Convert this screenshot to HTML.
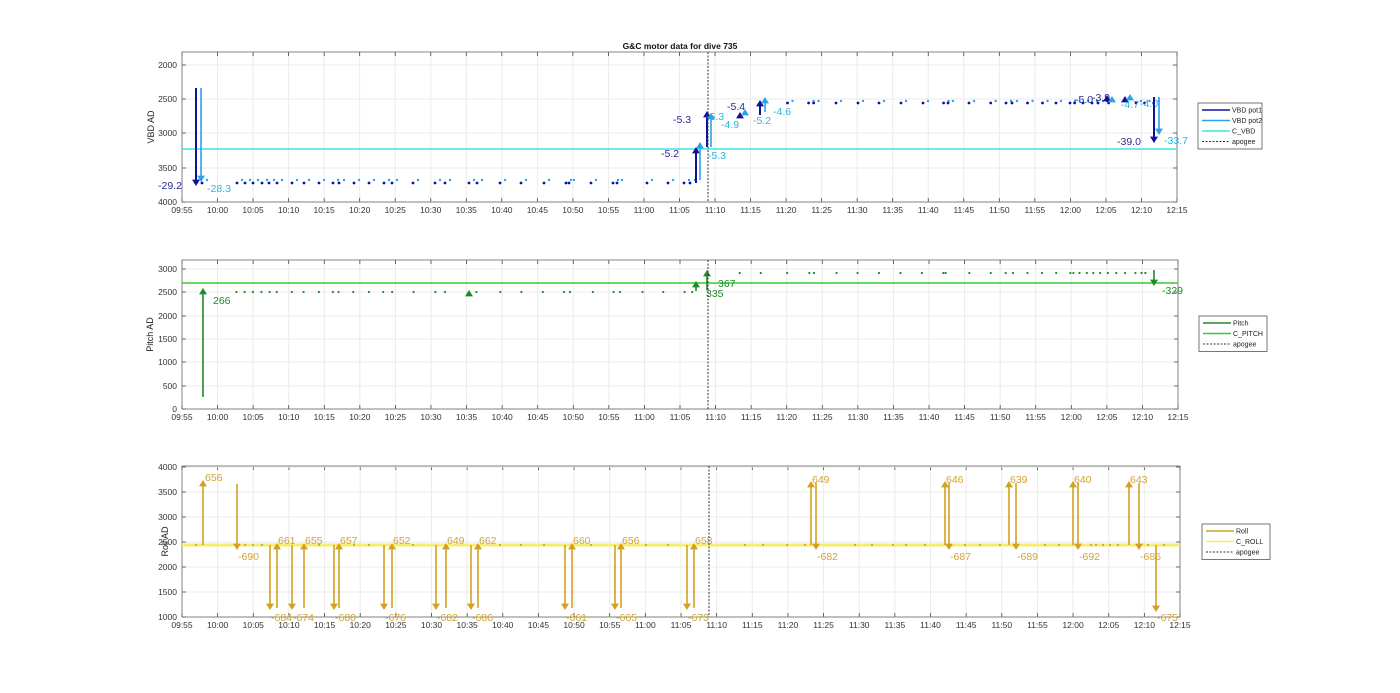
<!DOCTYPE html>
<html><head><meta charset="utf-8"><style>
html,body{margin:0;padding:0;background:#fff;width:1400px;height:693px;overflow:hidden}
svg{display:block;font-family:"Liberation Sans",sans-serif}
</style></head><body>
<svg id="s" width="1400" height="693" xmlns="http://www.w3.org/2000/svg">
<text x="680" y="49" font-size="8.5" font-weight="bold" text-anchor="middle" fill="#111">G&amp;C motor data for dive 735</text>
</svg>
<script>
var s=document.getElementById('s'),NS='http://www.w3.org/2000/svg';
function el(t,a,txt){var e=document.createElementNS(NS,t);for(var k in a)e.setAttribute(k,a[k]);if(txt!=null)e.textContent=txt;s.appendChild(e);return e;}
function line(x1,y1,x2,y2,c,w,d){var a={x1:x1,y1:y1,x2:x2,y2:y2,stroke:c,'stroke-width':w||1};if(d)a['stroke-dasharray']=d;return el('line',a);}
function txt(x,y,t,c,sz,anc){return el('text',{x:x,y:y,fill:c,'font-size':sz||11,'text-anchor':anc||'start'},t);}
function tri(x,y,c,dir,sz){sz=sz||4;var p=dir<0?[x-sz,y-sz*1.6,x+sz,y-sz*1.6,x,y]:[x-sz,y+sz*1.6,x+sz,y+sz*1.6,x,y];el('polygon',{points:p.join(','),fill:c});}
function arrow(x,y1,y2,c,w){line(x,y1,x,y2+(y2<y1?3:-3),c,w||2);tri(x,y2,c,y2>y1?-1:1,4);}
var times=[];for(var m=0;m<=140;m+=5){var h=9+Math.floor((55+m)/60),mm=(55+m)%60;times.push((h<10?'0':'')+h+':'+(mm<10?'0':'')+mm);}
function axes(L,R,T,B,yt,ylab,ylx){
 for(var i=0;i<=28;i++){var x=L+(R-L)*i/28;line(x,T,x,B,'#ebebeb',1);line(x,T,x,T+4,'#444',0.8);line(x,B,x,B-4,'#444',0.8);txt(x,B+11,times[i],'#333',8.5,'middle');}
 yt.forEach(function(t){line(L,t[1],R,t[1],'#ebebeb',1);line(L,t[1],L+4,t[1],'#444',0.8);line(R,t[1],R-4,t[1],'#444',0.8);txt(L-5,t[1]+3,t[0],'#333',8.5,'end');});
 el('rect',{x:L,y:T,width:R-L,height:B-T,fill:'none',stroke:'#666','stroke-width':0.8});
 var ym=(T+B)/2;el('text',{x:ylx,y:ym,fill:'#222','font-size':9,'text-anchor':'middle',transform:'rotate(-90 '+ylx+' '+ym+')'},ylab);
}
function legend(x,y,w,items){el('rect',{x:x,y:y,width:w,height:items.length*10.5+4,fill:'#fff',stroke:'#555','stroke-width':0.8});
 items.forEach(function(it,i){var yy=y+7+i*10.5;line(x+4,yy,x+32,yy,it[1],it[2],it[3]);txt(x+34,yy+2.5,it[0],'#222',7);});}
function dot(x,y,c,r){el('circle',{cx:x,cy:y,r:r||1.4,fill:c});}

/* Plot 1 */
var DB='#10109a',LB='#2aa4e4',CY='#40e4e4',DBT='#2a2a9a',LBT='#2ab4e0';
axes(182,1177,52,202,[['2000',65],['2500',99],['3000',133],['3500',168],['4000',202]],'VBD AD',154);
line(182,149,1177,149,CY,1.6);
var d1=[202,237,245,253,262,269,277,292,304,319,333,339,354,369,384,392,413,435,445,469,477,500,521,544,566,569,591,613,617,647,668,684,690,
787.5,808.6,813.6,836,858,879,901,923,943.6,948,969,990.7,1006,1012,1027.5,1042.5,1056,1070,1074.6,1083,1092,1098,1108.6,1136,1144.6,1153.6];
d1.forEach(function(x){var pre=x<700;dot(x,pre?183:103,DB);dot(x+5,pre?180:101,LB,1.2);});
arrow(196,88,186,DB,2);arrow(201,88,182,LB,1.6);
txt(158,189,'-29.2',DBT,10.5);txt(207,192,'-28.3',LBT,10.5);
arrow(696,183,147,DB,2);arrow(700,180,142,LB,1.6);
txt(661,157,'-5.2',DBT,10.5);txt(708,159,'-5.3',LBT,10.5);
arrow(707,147,111,DB,2);arrow(711,147,113,LB,1.6);
txt(673,123,'-5.3',DBT,10.5);txt(706,120,'-5.3',LBT,10.5);
tri(740,112,DB,1,4);tri(745,109,LB,1,4);txt(727,110,'-5.4',DBT,10.5);txt(721,128,'-4.9',LBT,10.5);
arrow(760,115,100,DB,2);arrow(765,112,97,LB,1.6);txt(753,124,'-5.2',LBT,10.5);txt(773,115,'-4.6',LBT,10.5);
txt(1075,103,'-5.0',DBT,10.5);txt(1092,101,'-3.9',DBT,10.5);
arrow(1107,102,95,DB,2);tri(1112,96,LB,1,4);tri(1125,96,DB,1,4);tri(1130,94,LB,1,4);
txt(1121,108,'-4.7',LBT,10.5);txt(1140,107,'-4.0',LBT,10.5);
arrow(1154,97,143,DB,2);arrow(1159,97,135,LB,1.6);
txt(1117,145,'-39.0',DBT,10.5);txt(1164,144,'-33.7',LBT,10.5);
line(708,52,708,202,'#333',1,'2,1.5');
legend(1198,103,64,[['VBD pot1',DB,1.6],['VBD pot2',LB,1.6],['C_VBD',CY,1.6],['apogee','#333',1,'2,1.5']]);

/* Plot 2 */
var G='#1e8a2a',LG='#33cc33';
axes(182,1178,260,409,[['0',409],['500',386],['1000',362],['1500',339],['2000',316],['2500',292],['3000',269]],'Pitch AD',153);
line(182,283,1178,283,LG,1.6);
[270,293,316,340,363,383,425,458,501,540,556,597,641,681,706,766,827,854,942,1009,1068,1128,1187,1204,1268,1326,1344,1407,1465,1525,1546].forEach(function(x){dot(140+x/2.8,292,G,1.1);});
[156,211,280,338,350,409,464,520,576,632,688,694,756,812,851,870,908,946,983,1020,1028,1044,1063,1080,1098,1118,1140,1163,1190,1206,1216].forEach(function(x){dot(680+x/2.613,273,G,1.1);});
arrow(203,397,288,G,1.6);txt(213,304,'266',G,10.5);
tri(469,290,G,1,4);
arrow(696,291,281,G,1.6);txt(706,297,'335',G,10.5);
arrow(707,290,270,G,1.6);txt(718,287,'367',G,10.5);
arrow(1154,270,286,G,1.6);txt(1162,294,'-329',G,10.5);
line(708,260,708,409,'#333',1,'2,1.5');
legend(1199,316,68,[['Pitch',G,1.6],['C_PITCH',LG,1.6],['apogee','#333',1,'2,1.5']]);

/* Plot 3 */
var O='#d4a020',OT='#d0a438',Y='#f5ec70';
axes(182,1180,466,617,[['1000',617],['1500',592],['2000',567],['2500',542],['3000',517],['3500',492],['4000',467]],'Roll AD',168);
line(182,545,1180,545,Y,3);
[196,245,253,262,319,354,369,413,500,521,544,591,646,668,745,763,787,805,855,872,893,906,925,965,980,1000,1045,1059,1091,1096,1103,1110,1118,1148,1164].forEach(function(x){dot(x,545,'#b8a040',1);});
function up(x,y2,l,ly){arrow(x,608,y2,O,1.6);txt(x+1,ly||y2-1,l,OT,10.5);}
function dn(x,y1,y2,l,ly){arrow(x,y1,y2,O,1.6);txt(x+1,ly,l,OT,10.5);}
arrow(203,545,480,O,1.6);txt(205,481,'656',OT,10.5);
dn(237,484,550,'-690',560);
var pairs=[[270,277,'-684','661'],[292,304,'-674','655'],[334,339,'-680','657'],[384,392,'-676','652'],[436,446,'-682','649'],[471,478,'-686','662'],[565,572,'-661','660'],[615,621,'-665','656'],[687,694,'-673','658']];
pairs.forEach(function(p){dn(p[0],545,610,p[2],621);arrow(p[1],608,543,O,1.6);txt(p[1]+1,544,p[3],OT,10.5);});
var hi=[[811,816,'649','-682'],[945,949,'646','-687'],[1009,1016,'639','-689'],[1073,1078,'640','-692'],[1129,1139,'643','-686']];
hi.forEach(function(p){arrow(p[0],545,481,O,1.6);txt(p[0]+1,483,p[2],OT,10.5);arrow(p[1],483,550,O,1.6);txt(p[1]+1,560,p[3],OT,10.5);});
dn(1156,545,612,'-675',621);
line(709,466,709,617,'#333',1,'2,1.5');
legend(1202,524,68,[['Roll',O,1.6],['C_ROLL',Y,1.6],['apogee','#333',1,'2,1.5']]);
</script>
</body></html>
